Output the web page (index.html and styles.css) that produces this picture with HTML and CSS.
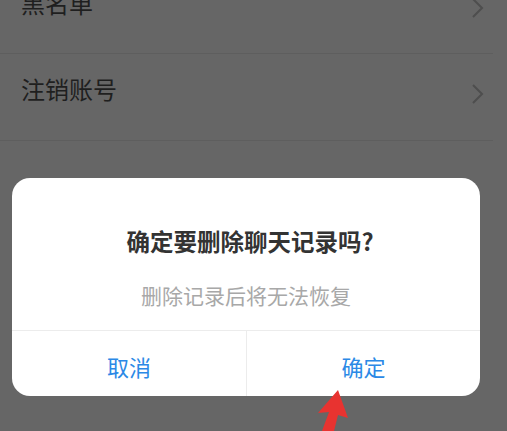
FILE: index.html
```html
<!DOCTYPE html>
<html lang="zh">
<head>
<meta charset="utf-8">
<link rel="stylesheet" href="styles.css">
</head>
<body>
<div class="screen">
  <ul class="list">
    <li class="row row-first"><span class="label">黑名单</span>
      <svg class="chev" width="14" height="20" viewBox="0 0 14 20"><path d="M2 1 L11 10 L2 19" fill="none" stroke="#4e4e4e" stroke-width="2"/></svg>
    </li>
    <li class="row"><span class="label">注销账号</span>
      <svg class="chev" width="14" height="20" viewBox="0 0 14 20"><path d="M2 1 L11 10 L2 19" fill="none" stroke="#4e4e4e" stroke-width="2"/></svg>
    </li>
  </ul>
  <div class="dialog">
    <div class="dialog-body">
      <div class="title">确定要删除聊天记录吗?</div>
      <div class="desc">删除记录后将无法恢复</div>
    </div>
    <div class="actions">
      <div class="btn">取消</div>
      <div class="btn">确定</div>
    </div>
  </div>
  <svg class="arrow" width="60" height="50" viewBox="0 0 60 50">
    <polygon points="38,0 48,28 38,25 34,41 22,41 29,22 18,23" fill="#e83330"/>
  </svg>
</div>
</body>
</html>
```
FILE: styles.css
```css
html, body {
  margin: 0;
  padding: 0;
}
body {
  background: #666666;
  font-family: "Noto Sans CJK SC", "Noto Sans", sans-serif;
}
.screen {
  position: relative;
  width: 507px;
  height: 431px;
  overflow: hidden;
  background: #666666;
}
.list {
  list-style: none;
  margin: -31px 0 0 0;
  padding: 0;
}
.row {
  height: 86px;
  border-bottom: 1px solid #5e5e5e;
  margin-right: 14px;
  display: flex;
  align-items: center;
  justify-content: space-between;
  padding-left: 21px;
  padding-right: 8px;
}
.row-first {
  height: 84px;
}
.label {
  font-size: 24px;
  color: #1f1f1f;
  line-height: 1;
  margin-top: -16px;
}
.chev {
  display: block;
  margin-top: -6px;
}
.dialog {
  position: absolute;
  left: 12px;
  top: 178px;
  width: 468px;
  height: 218px;
  background: #ffffff;
  border-radius: 18px;
  display: flex;
  flex-direction: column;
  overflow: hidden;
}
.dialog-body {
  height: 153px;
  border-bottom: 1px solid #ececec;
  display: flex;
  flex-direction: column;
  align-items: center;
  box-sizing: border-box;
  padding-top: 48px;
}
.title {
  font-size: 23.5px;
  font-weight: 700;
  color: #333333;
  line-height: 30px;
  margin-left: 8px;
}
.desc {
  margin-top: 26px;
  font-size: 21px;
  color: #a8a8a8;
  line-height: 26px;
}
.actions {
  flex: 1;
  display: grid;
  grid-template-columns: 234px 1fr;
}
.btn {
  display: flex;
  align-items: center;
  justify-content: center;
  font-size: 22px;
  color: #2b89e6;
  padding-top: 4px;
}
.btn + .btn {
  border-left: 1px solid #ececec;
}
.arrow {
  position: absolute;
  left: 300px;
  top: 390px;
}
```
